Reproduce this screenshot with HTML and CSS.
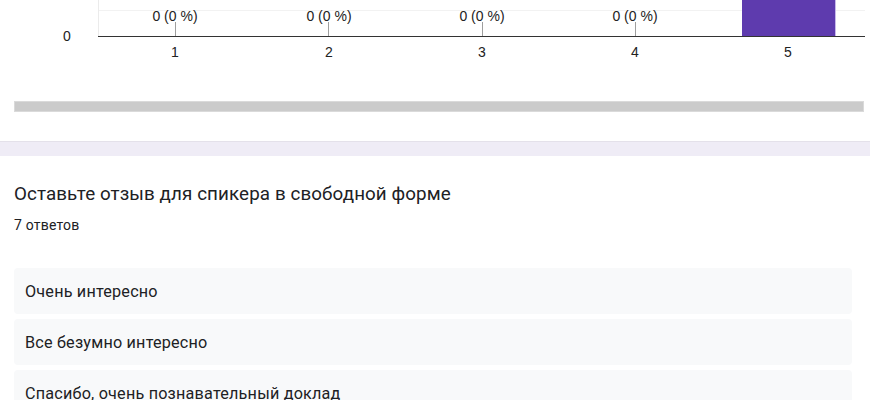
FILE: index.html
```html
<!DOCTYPE html>
<html lang="ru">
<head>
<meta charset="utf-8">
<link rel="stylesheet" href="styles.css">
</head>
<body>
<section class="card chart-card">
  <div class="chart">
    <svg width="870" height="101" viewBox="0 0 870 101" xmlns="http://www.w3.org/2000/svg">
      <line x1="98" y1="10.5" x2="865" y2="10.5" stroke="#f2f2f2" stroke-width="1"/>
      <line x1="98.5" y1="0" x2="98.5" y2="36" stroke="#ebebeb" stroke-width="1"/>
      <rect x="742" y="0" width="94" height="36" fill="#5e3bae"/>
      <line x1="835.5" y1="0" x2="835.5" y2="36" stroke="#c8b9ea" stroke-width="1"/>
      <g stroke="#9e9e9e" stroke-width="1">
        <line x1="175.5" y1="22" x2="175.5" y2="36"/>
        <line x1="328.5" y1="22" x2="328.5" y2="36"/>
        <line x1="482.5" y1="22" x2="482.5" y2="36"/>
        <line x1="635.5" y1="22" x2="635.5" y2="36"/>
      </g>
      <line x1="98" y1="36.5" x2="865" y2="36.5" stroke="#333" stroke-width="1.2"/>
      <g class="lbl" text-anchor="middle">
        <text x="175" y="21">0 (0 %)</text>
        <text x="329" y="21">0 (0 %)</text>
        <text x="482" y="21">0 (0 %)</text>
        <text x="635" y="21">0 (0 %)</text>
        <text x="175" y="57">1</text>
        <text x="329" y="57">2</text>
        <text x="482" y="57">3</text>
        <text x="635" y="57">4</text>
        <text x="788" y="57">5</text>
      </g>
      <text class="lbl" x="63" y="41">0</text>
    </svg>
  </div>
  <div class="scrolltrack"></div>
</section>
<div class="band"></div>
<section class="card text-card">
  <h2 class="title">Оставьте отзыв для спикера в свободной форме</h2>
  <div class="count">7 ответов</div>
  <div class="answers">
    <div class="answer">Очень интересно</div>
    <div class="answer">Все безумно интересно</div>
    <div class="answer">Спасибо, очень познавательный доклад</div>
  </div>
</section>
</body>
</html>
```

FILE: styles.css
```css
html, body {
  margin: 0;
  padding: 0;
  background: #ffffff;
  overflow: hidden;
}
body {
  width: 870px;
  height: 400px;
  font-family: Roboto, "Noto Sans", Arial, sans-serif;
  color: #202124;
}
.card {
  background: #fff;
}
.chart-card {
  height: 141px;
  box-sizing: border-box;
}
.chart {
  height: 101px;
}
.chart svg {
  display: block;
}
.lbl {
  font-family: "Liberation Sans", Arial, sans-serif;
  font-size: 14px;
  fill: #222222;
}
.scrolltrack {
  margin-left: 14px;
  width: 850px;
  height: 11px;
  box-sizing: border-box;
  background: #cbcbcb;
  border: 1px solid #dadada;
}
.band {
  height: 15px;
  box-sizing: border-box;
  background: #efecf6;
  border-top: 1px solid #e4e1ea;
}
.text-card {
  padding: 25px 18px 0 14px;
}
.title {
  margin: 0;
  font-size: 18.8px;
  font-weight: 400;
  line-height: 26px;
  letter-spacing: 0.1px;
}
.count {
  margin-top: 9px;
  font-size: 14px;
  line-height: 18px;
  letter-spacing: 0.2px;
}
.answers {
  margin-top: 34px;
  display: flex;
  flex-direction: column;
  gap: 5px;
}
.answer {
  height: 46px;
  box-sizing: border-box;
  padding: 0 11px;
  display: flex;
  align-items: center;
  background: #f8f9fa;
  border-radius: 4px;
  font-size: 16.2px;
  letter-spacing: 0.2px;
}
```
